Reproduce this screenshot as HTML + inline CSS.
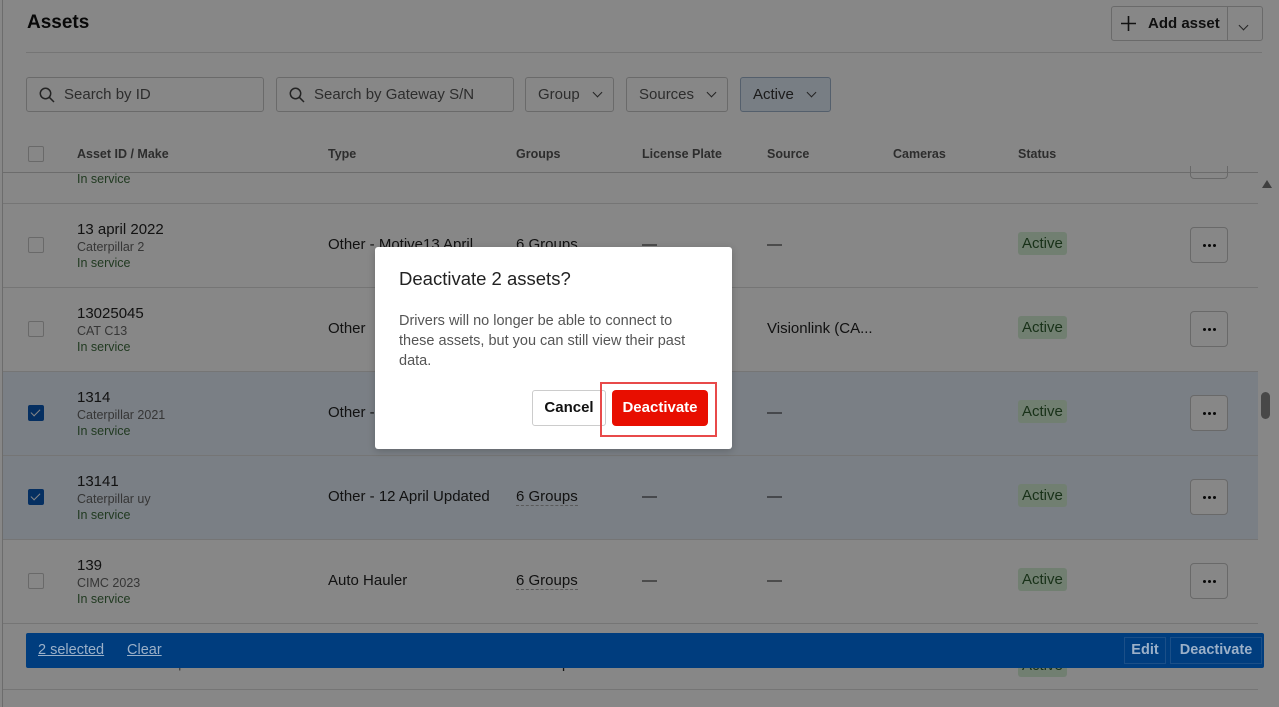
<!DOCTYPE html>
<html><head><meta charset="utf-8"><style>
*{box-sizing:border-box;margin:0;padding:0}
body{width:1279px;height:707px;overflow:hidden;position:relative;background:#fff;font-family:"Liberation Sans",sans-serif;color:#1f1f1f}
.a{position:absolute}
.inp{position:absolute;top:77px;height:35px;border:1px solid #c8c8c8;border-radius:3px;font-size:15px;color:#555;display:flex;align-items:center;padding-left:12px}
.inp svg{margin-right:9px}
.hd{position:absolute;top:147px;font-size:12.5px;font-weight:bold;color:#555}
.row{position:absolute;left:3px;width:1255px;height:84px;border-bottom:1px solid #ddd}
.sel{background:#e6f0fb}
.cb{position:absolute;left:25px;width:16px;height:16px;border:1px solid #c6c6c6;border-radius:2px;background:#fff}
.cb.on{background:#0a59b8;border-color:#0a59b8}
.cb.on::after{content:"";position:absolute;left:4px;top:1px;width:4px;height:8px;border-right:1.5px solid #fff;border-bottom:1.5px solid #fff;transform:rotate(45deg)}
.t1{position:absolute;left:74px;top:17px;font-size:15px;color:#222}
.t2{position:absolute;left:74px;top:36px;font-size:12.5px;color:#666}
.t3{position:absolute;left:74px;top:52px;font-size:12.5px;color:#3f6e3f}
.c{position:absolute;top:32px;font-size:15px;color:#222}
.g{border-bottom:1px dashed #aaa}
.badge{position:absolute;left:1015px;top:28px;height:23px;padding:0 4px;background:#d6f0d6;border-radius:3px;font-size:15px;color:#2f5e2f;line-height:23px}
.dots{position:absolute;left:1187px;top:23px;width:38px;height:36px;border:1px solid #c6c6c6;border-radius:4px;background:#fff}
.dots::after{content:"";position:absolute;left:12px;top:16px;width:3px;height:3px;border-radius:50%;background:#111;box-shadow:5px 0 #111,10px 0 #111}
.chev{display:inline-block;width:7px;height:7px;border-right:1.5px solid #444;border-bottom:1.5px solid #444;transform:rotate(45deg);margin:-4px 0 0 14px}
</style></head><body>
<div class="a" style="left:2px;top:0;width:1px;height:707px;background:#ccc"></div>
<div class="a" style="left:27px;top:12px;font-size:19px;font-weight:bold;color:#111">Assets</div>
<div class="a" style="left:1111px;top:6px;width:152px;height:35px;border:1px solid #c8c8c8;border-radius:3px;background:#fff"></div>
<svg class="a" style="left:1120px;top:15px" width="17" height="17" viewBox="0 0 17 17"><path d="M8.5 1v15M1 8.5h15" stroke="#222" stroke-width="1.6"/></svg>
<div class="a" style="left:1148px;top:15px;font-size:15px;font-weight:bold">Add asset</div>
<div class="a" style="left:1227px;top:7px;width:1px;height:33px;background:#c8c8c8"></div>
<div class="a" style="left:1240px;top:16px"><span class="chev" style="margin:0"></span></div>
<div class="a" style="left:26px;top:52px;width:1236px;height:1px;background:#ddd"></div>
<div class="inp" style="left:26px;width:238px"><svg width="16" height="16" viewBox="0 0 16 16"><circle cx="6.5" cy="6.5" r="5.2" fill="none" stroke="#444" stroke-width="1.5"/><path d="M10.3 10.3L15 15" stroke="#444" stroke-width="1.5"/></svg>Search by ID</div>
<div class="inp" style="left:276px;width:238px"><svg width="16" height="16" viewBox="0 0 16 16"><circle cx="6.5" cy="6.5" r="5.2" fill="none" stroke="#444" stroke-width="1.5"/><path d="M10.3 10.3L15 15" stroke="#444" stroke-width="1.5"/></svg>Search by Gateway S/N</div>
<div class="inp" style="left:525px;width:89px">Group<span class="chev"></span></div>
<div class="inp" style="left:626px;width:102px">Sources<span class="chev"></span></div>
<div class="inp" style="left:740px;width:91px;background:#e3eefa;border-color:#9fb4cc;color:#333">Active<span class="chev"></span></div>
<div class="a" style="left:28px;top:146px;width:16px;height:16px;border:1px solid #c6c6c6;border-radius:2px"></div>
<div class="hd" style="left:77px">Asset ID / Make</div>
<div class="hd" style="left:328px">Type</div>
<div class="hd" style="left:516px">Groups</div>
<div class="hd" style="left:642px">License Plate</div>
<div class="hd" style="left:767px">Source</div>
<div class="hd" style="left:893px">Cameras</div>
<div class="hd" style="left:1018px">Status</div>
<div class="a" style="left:3px;top:172px;width:1255px;height:1px;background:#ccc"></div>
<div class="a" style="left:77px;top:172px;font-size:12.5px;color:#3f6e3f">In service</div>
<div class="a" style="left:1190px;top:166px;width:38px;height:13px;border:1px solid #c6c6c6;border-top:none;border-radius:0 0 4px 4px"></div>
<div class="a" style="left:3px;top:203px;width:1255px;height:1px;background:#ddd"></div>

<div class="row" style="top:204px"><div class="cb" style="top:33px"></div><div class="t1">13 april 2022</div><div class="t2">Caterpillar 2</div><div class="t3">In service</div><div class="c" style="left:325px">Other - Motive13 April</div><div class="c g" style="left:513px">6 Groups</div><div class="c" style="left:639px">—</div><div class="c" style="left:764px">—</div><div class="badge">Active</div><div class="dots"></div></div>
<div class="row" style="top:288px"><div class="cb" style="top:33px"></div><div class="t1">13025045</div><div class="t2">CAT C13</div><div class="t3">In service</div><div class="c" style="left:325px">Other</div><div class="c" style="left:764px">Visionlink (CA...</div><div class="badge">Active</div><div class="dots"></div></div>
<div class="row sel" style="top:372px"><div class="cb on" style="top:33px"></div><div class="t1">1314</div><div class="t2">Caterpillar 2021</div><div class="t3">In service</div><div class="c" style="left:325px">Other - Motive</div><div class="c" style="left:764px">—</div><div class="badge">Active</div><div class="dots"></div></div>
<div class="row sel" style="top:456px"><div class="cb on" style="top:33px"></div><div class="t1">13141</div><div class="t2">Caterpillar uy</div><div class="t3">In service</div><div class="c" style="left:325px">Other - 12 April Updated</div><div class="c g" style="left:513px">6 Groups</div><div class="c" style="left:639px">—</div><div class="c" style="left:764px">—</div><div class="badge">Active</div><div class="dots"></div></div>
<div class="row" style="top:540px"><div class="cb" style="top:33px"></div><div class="t1">139</div><div class="t2">CIMC 2023</div><div class="t3">In service</div><div class="c" style="left:325px">Auto Hauler</div><div class="c g" style="left:513px">6 Groups</div><div class="c" style="left:639px">—</div><div class="c" style="left:764px">—</div><div class="badge">Active</div><div class="dots"></div></div>
<div class="row" style="top:624px;height:66px"><div class="t2" style="top:33px">Great Dane Champion SE</div><div class="c" style="left:325px;top:31px">Box Truck</div><div class="c" style="left:513px;top:31px">6 Groups</div><div class="badge" style="top:30px">Active</div></div>

<div class="a" style="left:1262px;top:180px;width:0;height:0;border-left:5px solid transparent;border-right:5px solid transparent;border-bottom:8px solid #777"></div>
<div class="a" style="left:1261px;top:392px;width:9px;height:27px;border-radius:5px;background:#888"></div>

<div class="a" style="left:0;top:0;width:1279px;height:707px;background:rgba(0,0,0,.47)"></div>

<div class="a" style="left:26px;top:633px;width:1238px;height:35px;background:#003d7e;border-radius:2px"></div>
<div class="a" style="left:38px;top:642px;font-size:14.5px;color:#9bb0c8;text-decoration:underline">2 selected</div>
<div class="a" style="left:127px;top:642px;font-size:14.5px;color:#9bb0c8;text-decoration:underline">Clear</div>
<div class="a" style="left:1124px;top:637px;width:42px;height:27px;border:1px solid #1b4f88;color:#9bb0c8;font-size:14.5px;font-weight:bold;text-align:center;line-height:25px">Edit</div>
<div class="a" style="left:1170px;top:637px;width:92px;height:27px;border:1px solid #1b4f88;color:#9bb0c8;font-size:14.5px;font-weight:bold;text-align:center;line-height:25px">Deactivate</div>

<div class="a" style="left:375px;top:247px;width:357px;height:202px;background:#fff;border-radius:3px;box-shadow:0 2px 8px rgba(0,0,0,.2)"></div>
<div class="a" style="left:399px;top:268px;font-size:18.5px;color:#222">Deactivate 2 assets?</div>
<div class="a" style="left:399px;top:311px;width:300px;font-size:14.5px;line-height:20px;color:#555">Drivers will no longer be able to connect to these assets, but you can still view their past data.</div>
<div class="a" style="left:532px;top:390px;width:74px;height:36px;border:1px solid #ccc;border-radius:3px;font-size:15px;font-weight:bold;text-align:center;line-height:34px;color:#111">Cancel</div>
<div class="a" style="left:600px;top:382px;width:117px;height:55px;border:2px solid #e84a4a"></div>
<div class="a" style="left:612px;top:390px;width:96px;height:36px;background:#e80e00;border-radius:4px;font-size:15px;font-weight:bold;color:#fff;text-align:center;line-height:36px">Deactivate</div>
</body></html>
